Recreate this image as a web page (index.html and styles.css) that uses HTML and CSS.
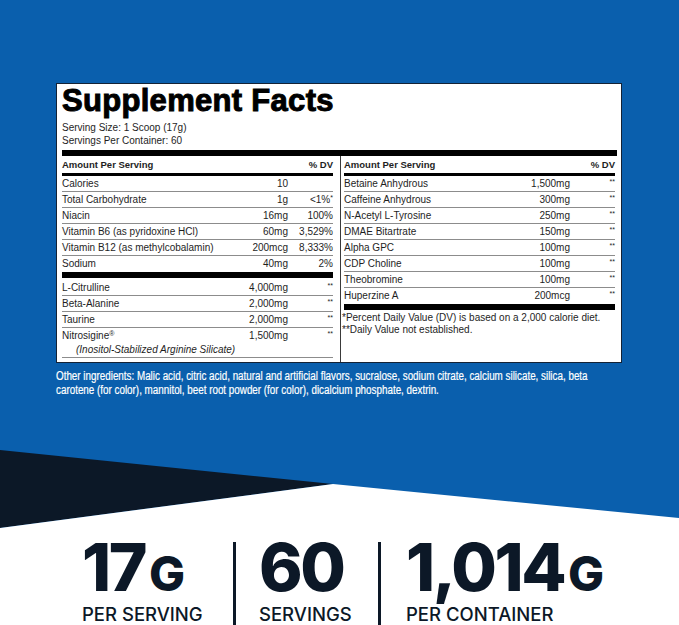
FILE: index.html
```html
<!DOCTYPE html>
<html lang="en">
<head>
<meta charset="utf-8">
<title>Supplement Facts</title>
<link rel="stylesheet" href="styles.css">
</head>
<body>
<div class="page">
  <section class="facts">
    <h1 class="title">Supplement Facts</h1>
    <p class="serving">Serving Size: 1 Scoop (17g)<br>Servings Per Container: 60</p>
    <div class="bar"></div>
    <div class="cols">
      <div class="col left">
        <div class="row head"><span>Amount Per Serving</span><span></span><span class="dv">% DV</span></div>
        <div class="row"><span>Calories</span><span class="amt">10</span><span class="dv"></span></div>
        <div class="row"><span>Total Carbohydrate</span><span class="amt">1g</span><span class="dv">&lt;1%<sup class="ast">*</sup></span></div>
        <div class="row"><span>Niacin</span><span class="amt">16mg</span><span class="dv">100%</span></div>
        <div class="row"><span>Vitamin B6 (as pyridoxine HCl)</span><span class="amt">60mg</span><span class="dv">3,529%</span></div>
        <div class="row"><span>Vitamin B12 (as methylcobalamin)</span><span class="amt">200mcg</span><span class="dv">8,333%</span></div>
        <div class="row last"><span>Sodium</span><span class="amt">40mg</span><span class="dv">2%</span></div>
        <div class="bar mid"></div>
        <div class="row first"><span>L-Citrulline</span><span class="amt">4,000mg</span><span class="dv"><sup class="ast">**</sup></span></div>
        <div class="row"><span>Beta-Alanine</span><span class="amt">2,000mg</span><span class="dv"><sup class="ast">**</sup></span></div>
        <div class="row"><span>Taurine</span><span class="amt">2,000mg</span><span class="dv"><sup class="ast">**</sup></span></div>
        <div class="row tall"><span class="name">Nitrosigine<sup class="reg">®</sup><br><em class="sub">(Inositol-Stabilized Arginine Silicate)</em></span><span class="amt">1,500mg</span><span class="dv"><sup class="ast">**</sup></span></div>
      </div>
      <div class="col right">
        <div class="row head"><span>Amount Per Serving</span><span></span><span class="dv">% DV</span></div>
        <div class="row"><span>Betaine Anhydrous</span><span class="amt">1,500mg</span><span class="dv"><sup class="ast">**</sup></span></div>
        <div class="row"><span>Caffeine Anhydrous</span><span class="amt">300mg</span><span class="dv"><sup class="ast">**</sup></span></div>
        <div class="row"><span>N-Acetyl L-Tyrosine</span><span class="amt">250mg</span><span class="dv"><sup class="ast">**</sup></span></div>
        <div class="row"><span>DMAE Bitartrate</span><span class="amt">150mg</span><span class="dv"><sup class="ast">**</sup></span></div>
        <div class="row"><span>Alpha GPC</span><span class="amt">100mg</span><span class="dv"><sup class="ast">**</sup></span></div>
        <div class="row"><span>CDP Choline</span><span class="amt">100mg</span><span class="dv"><sup class="ast">**</sup></span></div>
        <div class="row"><span>Theobromine</span><span class="amt">100mg</span><span class="dv"><sup class="ast">**</sup></span></div>
        <div class="row last"><span>Huperzine A</span><span class="amt">200mcg</span><span class="dv"><sup class="ast">**</sup></span></div>
        <div class="bar mid"></div>
        <p class="notes">*Percent Daily Value (DV) is based on a 2,000 calorie diet.<br>**Daily Value not established.</p>
      </div>
    </div>
  </section>
  <p class="other"><span class="other-text">Other ingredients: Malic acid, citric acid, natural and artificial flavors, sucralose, sodium citrate, calcium silicate, silica, beta<br>carotene (for color), mannitol, beet root powder (for color), dicalcium phosphate, dextrin.</span></p>
  <div class="bottom">
    <svg class="shapes" viewBox="0 0 679 185" width="679" height="185" aria-hidden="true">
      <polygon points="0,10 333,44 0,88" fill="#0c1827"/>
      <polygon points="0,88 333,44 679,78 679,185 0,185" fill="#ffffff"/>
    </svg>
    <div class="stats">
      <div class="stat">
        <div class="num">17<span class="unit">G</span></div>
        <div class="label">PER SERVING</div>
      </div>
      <div class="divider"></div>
      <div class="stat s2">
        <div class="num">60</div>
        <div class="label">SERVINGS</div>
      </div>
      <div class="divider"></div>
      <div class="stat s3">
        <div class="num">1,014<span class="unit">G</span></div>
        <div class="label">PER CONTAINER</div>
      </div>
    </div>
  </div>
</div>
</body>
</html>
```

FILE: styles.css
```css
* { box-sizing: border-box; }

html, body {
  margin: 0;
  padding: 0;
}

body {
  width: 679px;
  height: 625px;
  overflow: hidden;
  background: #0a5fad;
  font-family: "Liberation Sans", Arial, sans-serif;
}

.page {
  display: flex;
  flex-direction: column;
  height: 625px;
  padding-top: 83px;
}

.facts {
  margin-left: 56px;
  width: 566px;
  height: 280px;
  background: #ffffff;
  border: 1px solid #142235;
  padding: 2px 4px 0 5px;
  display: flex;
  flex-direction: column;
  color: #1e1e1e;
}

.title {
  margin: 0;
  font-size: 31px;
  line-height: 30px;
  font-weight: 700;
  color: #000;
  -webkit-text-stroke: 1px #000;
  letter-spacing: 0.3px;
}

.serving {
  margin: 5px 0 0;
  font-size: 10px;
  line-height: 13px;
}

.bar {
  height: 6px;
  background: #000;
  margin-top: 3px;
  flex: none;
}

.bar.mid {
  margin-top: 0;
}

.cols {
  flex: 1;
  display: flex;
}

.col {
  display: flex;
  flex-direction: column;
}

.left {
  width: 272px;
  padding-right: 1px;
}

.right {
  margin-left: 6px;
  border-left: 1px solid #3a3a3a;
  padding-left: 3px;
  width: 277px;
  padding-right: 2px;
}

.row {
  display: grid;
  grid-template-columns: minmax(0, 1fr) 60px 45px;
  font-size: 10px;
  line-height: 15px;
  border-bottom: 1px solid #8c8c8c;
  white-space: nowrap;
}

.row.last {
  border-bottom: none;
  height: 16px;
}

.row.head {
  font-weight: 700;
  font-size: 9.5px;
  line-height: 16px;
  padding-top: 1px;
  border-bottom: 3px solid #000;
}

.row.first {
  padding-top: 2px;
}

.row.tall {
  line-height: 14px;
  padding-top: 1px;
}

.name {
  overflow: visible;
}

.amt,
.dv {
  text-align: right;
}

.ast {
  font-size: 7px;
  vertical-align: 3px;
  line-height: 0;
}

.reg {
  font-size: 7px;
  vertical-align: 3px;
  line-height: 0;
}

.sub {
  padding-left: 14px;
}

.notes {
  margin: 2px 0 0 -2px;
  font-size: 10px;
  line-height: 12px;
}

.other {
  margin: 6px 0 0 56px;
  color: #ffffff;
}

.other-text {
  display: inline-block;
  white-space: nowrap;
  font-size: 12px;
  line-height: 14px;
  transform: scaleX(0.82);
  transform-origin: left top;
  -webkit-text-stroke: 0.2px #ffffff;
}

.bottom {
  margin-top: auto;
  height: 185px;
  display: grid;
}

.shapes {
  grid-area: 1 / 1;
  display: block;
}

.stats {
  grid-area: 1 / 1;
  display: grid;
  grid-template-columns: 151px 3px 142px 3px 1fr;
  padding: 94px 0 0 82px;
  color: #0c1827;
  font-family: Inter, "Liberation Sans", sans-serif;
}

.stat.s2 { padding-left: 23px; }
.stat.s3 { padding-left: 25px; }

.num {
  font-size: 66px;
  line-height: 62px;
  font-weight: 800;
  letter-spacing: -2.5px;
  white-space: nowrap;
  padding-top: 2px;
}

.unit {
  font-size: 48px;
  line-height: 0;
  letter-spacing: 0;
  margin-left: 4px;
}

.label {
  margin-top: 6px;
  font-size: 18.5px;
  line-height: 20px;
  font-weight: 500;
  white-space: nowrap;
}

.divider {
  background: #0c1827;
  margin-top: 8px;
}
```
